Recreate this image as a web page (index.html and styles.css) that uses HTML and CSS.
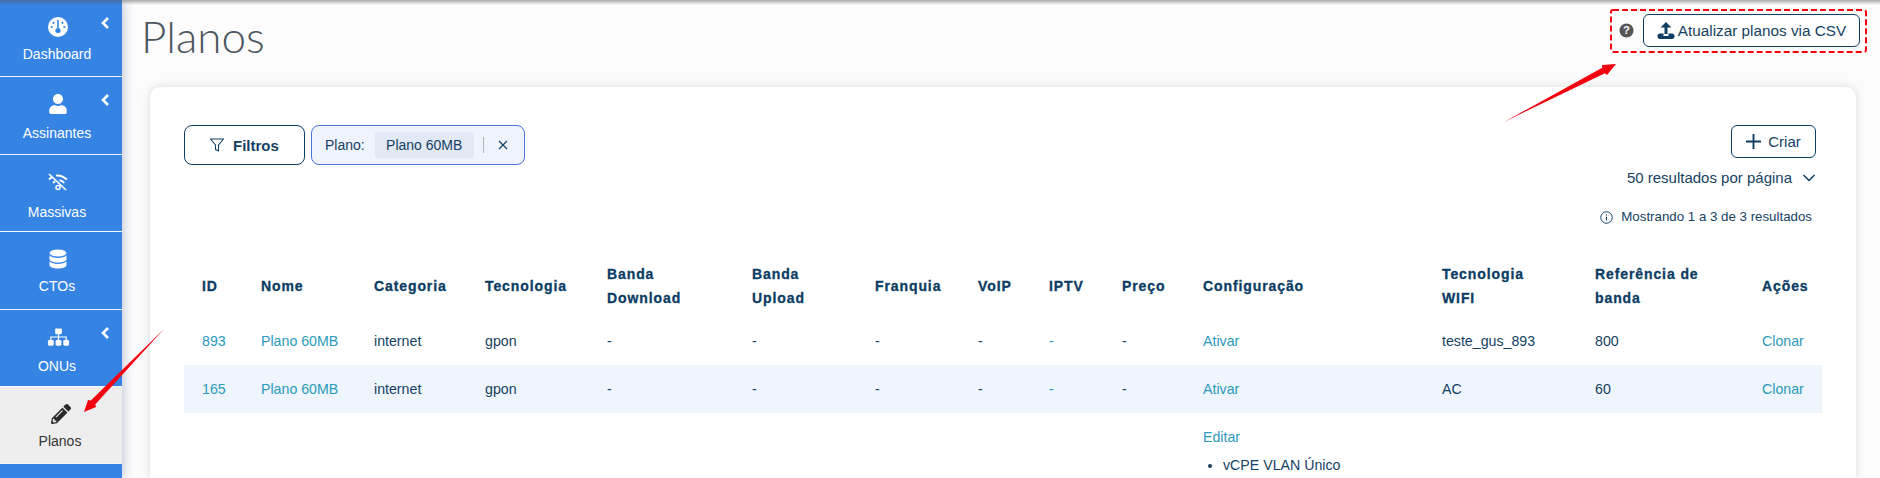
FILE: index.html
```html
<!DOCTYPE html>
<html lang="pt-BR">
<head>
    <meta charset="UTF-8">
    <title>Planos</title>
    <link rel="stylesheet" href="styles.css">
</head>
<body>
    <div class="layout">
        <!-- Sidebar -->
        <nav class="sidebar">
            <a class="nav-item">
                <svg class="nav-icon" viewBox="0 0 20 20"><circle cx="10" cy="10" r="10" fill="#fff"/><path d="M10 3v8" stroke="#3584e4" stroke-width="1.6"/><circle cx="10" cy="13.5" r="2.6" fill="#3584e4"/><circle cx="5.5" cy="5.8" r="1.1" fill="#3584e4"/><circle cx="14.5" cy="5.8" r="1.1" fill="#3584e4"/><circle cx="3.6" cy="10" r="1.1" fill="#3584e4"/><circle cx="16.4" cy="10" r="1.1" fill="#3584e4"/></svg>
                <span>Dashboard</span>
                <svg class="nav-chevron" viewBox="0 0 10 14"><path d="M8 2L3 7l5 5" fill="none" stroke="#fff" stroke-width="2.6"/></svg>
            </a>
            <a class="nav-item nav-item-mid">
                <svg class="nav-icon" viewBox="0 0 448 512"><path fill="#fff" d="M224 256c70.7 0 128-57.3 128-128S294.7 0 224 0 96 57.3 96 128s57.3 128 128 128zm89.6 32h-16.7c-22.2 10.2-46.9 16-72.9 16s-50.6-5.8-72.9-16h-16.7C60.2 288 0 348.2 0 422.4V464c0 26.5 21.5 48 48 48h352c26.5 0 48-21.5 48-48v-41.6c0-74.2-60.2-134.4-134.4-134.4z"/></svg>
                <span>Assinantes</span>
                <svg class="nav-chevron" viewBox="0 0 10 14"><path d="M8 2L3 7l5 5" fill="none" stroke="#fff" stroke-width="2.6"/></svg>
            </a>
            <a class="nav-item nav-item-low">
                <svg class="nav-icon" viewBox="0 0 20 20" fill="none" stroke="#fff"><path d="M1 2l17 16" stroke-width="1.7"/><path d="M1 7.5C2 6.5 3 6 4 5.4M8 3.6c4-.6 7.500 1 11 4" stroke-width="1.9"/><path d="M5 11c.7-.7 1.400-1.200 2.200-1.600M11.500 8.200c2 .3 3.500 1.200 4.800 2.600" stroke-width="1.9"/><circle cx="10" cy="15.500" r="2" stroke-width="1.500"/></svg>
                <span>Massivas</span>
            </a>
            <a class="nav-item">
                <svg class="nav-icon" viewBox="0 0 20 20"><ellipse cx="10" cy="4" rx="8.500" ry="3.500" fill="#fff"/><path fill="#fff" d="M1.500 6.300C3 8.200 6.500 9 10 9s7-.8 8.500-2.700V10c0 2-3.800 3.500-8.500 3.500S1.500 12 1.500 10z"/><path fill="#fff" d="M1.500 12.300C3 14.200 6.500 15 10 15s7-.8 8.500-2.700V16c0 2-3.800 3.500-8.500 3.500S1.500 18 1.500 16z"/></svg>
                <span>CTOs</span>
            </a>
            <a class="nav-item nav-item-mid">
                <svg class="nav-icon nav-icon-wide" viewBox="0 0 24 20"><rect x="8.500" y="1" width="7" height="6" rx="1.200" fill="#fff"/><path d="M12 7v6M4 13v-3h16v3" fill="none" stroke="#fff" stroke-width="1.300"/><rect x="1" y="13" width="6" height="6" rx="1.500" fill="#fff"/><rect x="9" y="13" width="6" height="6" rx="1.500" fill="#fff"/><rect x="17" y="13" width="6" height="6" rx="1.500" fill="#fff"/></svg>
                <span>ONUs</span>
                <svg class="nav-chevron" viewBox="0 0 10 14"><path d="M8 2L3 7l5 5" fill="none" stroke="#fff" stroke-width="2.6"/></svg>
            </a>
            <a class="nav-item nav-item-active">
                <svg class="nav-icon" viewBox="0 0 512 512"><path fill="#2b2b2b" d="M497.900 142.100l-46.100 46.100c-4.700 4.700-12.300 4.700-17 0l-111-111c-4.700-4.700-4.700-12.300 0-17l46.100-46.100c18.700-18.700 49.100-18.700 67.900 0l60.100 60.100c18.800 18.700 18.800 49.100 0 67.900zM284.200 99.800L21.600 362.400.4 483.900c-2.900 16.400 11.400 30.600 27.800 27.800l121.500-21.300 262.600-262.600c4.700-4.700 4.700-12.300 0-17l-111-111c-4.800-4.700-12.400-4.700-17.100 0zM124.100 339.900c-5.500-5.500-5.500-14.300 0-19.800l154-154c5.500-5.500 14.300-5.500 19.800 0s5.500 14.300 0 19.800l-154 154c-5.500 5.500-14.300 5.500-19.800 0zM88 424h48v36.300l-64.500 11.300-31.100-31.100L51.700 376H88v48z"/></svg>
                <span>Planos</span>
            </a>
            <div class="nav-rest"></div>
        </nav>

        <main class="content">
            <header class="page-header">
                <h1>Planos</h1>
                <div class="page-actions">
                    <svg class="help-icon" viewBox="0 0 16 16"><circle cx="8" cy="8" r="7.500" fill="#555"/><text x="8" y="12" text-anchor="middle" class="help-mark">?</text></svg>
                    <button class="btn btn-csv">
                        <svg class="csv-icon" viewBox="0 0 18 18"><path d="M9 0L3.500 5.500h4V12h3V5.500h4z" fill="#0e3f63"/><path d="M.5 14c0-1.500 1-2.500 2.500-2.500h3.500V14h5v-2.500H15c1.500 0 2.500 1 2.500 2.500v.5c0 1.500-1 2.500-2.500 2.500H3c-1.500 0-2.500-1-2.500-2.500z" fill="#0e3f63"/></svg>
                        Atualizar planos via CSV
                    </button>
                </div>
            </header>

            <section class="card">
                <div class="toolbar">
                    <div class="filters">
                        <button class="btn btn-filter">
                            <svg class="filter-icon" viewBox="0 0 16 16"><path d="M1.500 2h13L9.500 8v6l-3-1.500V8z" fill="none" stroke="#0e3f63" stroke-width="1.100" stroke-linejoin="round"/></svg>
                            Filtros
                        </button>
                        <div class="chip">
                            <span>Plano:</span>
                            <span class="chip-tag">Plano 60MB</span>
                            <span class="chip-sep"></span>
                            <svg class="chip-close" viewBox="0 0 10 10"><path d="M1 1l8 8M9 1l-8 8" stroke="#0e3f63" stroke-width="1.100"/></svg>
                        </div>
                    </div>
                    <div class="toolbar-right">
                        <button class="btn btn-create">
                            <svg class="plus-icon" viewBox="0 0 16 16"><path d="M8 0v16M0 8h16" stroke="#0e3f63" stroke-width="2"/></svg>
                            Criar
                        </button>
                        <div class="per-page">
                            50 resultados por página
                            <svg class="per-page-icon" viewBox="0 0 14 8"><path d="M1.500 1L7 6.500 12.500 1" fill="none" stroke="#0e3f63" stroke-width="1.500"/></svg>
                        </div>
                        <div class="showing">
                            <svg class="info-icon" viewBox="0 0 12 12"><circle cx="6" cy="6" r="5.300" fill="none" stroke="#0e3f63" stroke-width=".9"/><path d="M6 5.200v3.500M6 3v1.100" stroke="#0e3f63" stroke-width="1"/></svg>
                            Mostrando 1 a 3 de 3 resultados
                        </div>
                    </div>
                </div>

                <table class="plans">
                    <colgroup>
                        <col class="c-id"><col class="c-name"><col class="c-cat"><col class="c-tec"><col class="c-down"><col class="c-up"><col class="c-fran"><col class="c-voip"><col class="c-iptv"><col class="c-price"><col class="c-conf"><col class="c-wifi"><col class="c-ref"><col class="c-act">
                    </colgroup>
                    <thead>
                        <tr>
                            <th>ID</th><th>Nome</th><th>Categoria</th><th>Tecnologia</th><th>Banda<br>Download</th><th>Banda<br>Upload</th><th>Franquia</th><th>VoIP</th><th>IPTV</th><th>Preço</th><th>Configuração</th><th>Tecnologia<br>WIFI</th><th>Referência de<br>banda</th><th>Ações</th>
                        </tr>
                    </thead>
                    <tbody>
                        <tr>
                            <td><a>893</a></td><td><a>Plano 60MB</a></td><td>internet</td><td>gpon</td><td>-</td><td>-</td><td>-</td><td>-</td><td><a>-</a></td><td>-</td><td><a>Ativar</a></td><td>teste_gus_893</td><td>800</td><td><a>Clonar</a></td>
                        </tr>
                        <tr class="row-alt">
                            <td><a>165</a></td><td><a>Plano 60MB</a></td><td>internet</td><td>gpon</td><td>-</td><td>-</td><td>-</td><td>-</td><td><a>-</a></td><td>-</td><td><a>Ativar</a></td><td>AC</td><td>60</td><td><a>Clonar</a></td>
                        </tr>
                        <tr class="row-top">
                            <td></td><td></td><td></td><td></td><td></td><td></td><td></td><td></td><td></td><td></td>
                            <td>
                                <a>Editar</a>
                                <ul class="conf-list"><li>vCPE VLAN Único</li></ul>
                            </td>
                            <td></td><td></td><td></td>
                        </tr>
                    </tbody>
                </table>
            </section>
        </main>
    </div>

    <!-- Annotations drawn over the page -->
    <div class="top-shade"></div>
    <svg class="notes" viewBox="0 0 1880 478">
        <rect x="1611" y="10" width="255" height="42" rx="2" fill="none" stroke="#f5000f" stroke-width="2" stroke-dasharray="6 3"/>
        <polygon fill="#f5000f" points="1504,122 1604.900,73.200 1607,75 1616,64 1602,65 1602.200,67.800"/>
        <polygon fill="#f5000f" points="164,329 95.200,404.600 96,407 84,412 88,400 90.800,400.400"/>
    </svg>
</body>
</html>
```

FILE: styles.css
```css
* {
    box-sizing: border-box;
}
html, body {
    margin: 0;
    height: 478px;
    overflow: hidden;
}
body {
    font-family: "Liberation Sans", Arial, sans-serif;
    font-size: 14px;
    color: #163f63;
    background: #fcfcfd;
    position: relative;
}
.layout {
    display: flex;
    height: 478px;
}

/* Sidebar */
.sidebar {
    width: 122px;
    flex: none;
    display: flex;
    flex-direction: column;
    background: #3584e4;
    box-shadow: 2px 0 10px rgba(60,90,130,0.3);
    position: relative;
}
.nav-item {
    height: 77.4px;
    flex: none;
    padding: 17px 8px 0 0;
    display: flex;
    flex-direction: column;
    align-items: center;
    color: #fff;
    border-bottom: 1.5px solid #f3f7fd;
    position: relative;
}
.nav-item span {
    margin-top: 9px;
    line-height: 16px;
}
.nav-icon {
    width: 20px;
    height: 20px;
    display: block;
    margin-left: 2px;
}
.nav-icon-wide {
    width: 23px;
}
.nav-item-mid span {
    margin-top: 11px;
}
.nav-item-low span {
    margin-top: 12px;
}
.nav-item-active {
    background: #eee;
    color: #333;
    padding: 17px 2px 0 0;
}
.nav-chevron {
    position: absolute;
    top: 16px;
    right: 12px;
    width: 10px;
    height: 14px;
}
.nav-rest {
    flex: 1;
}

/* Main area */
.content {
    flex: 1;
    min-width: 0;
    padding: 0 24px 0 28px;
}
.page-header {
    height: 87px;
    display: flex;
    justify-content: space-between;
    align-items: flex-start;
}
h1 {
    margin: 10px 0 0 -9px;
    font-family: Lato, sans-serif;
    font-weight: 300;
    font-size: 44px;
    line-height: 52px;
    color: #4d565e;
}
.page-actions {
    display: flex;
    align-items: center;
    gap: 9px;
    margin: 14px -4px 0 0;
}
.help-icon {
    width: 15px;
    height: 15px;
}
.help-mark {
    font-size: 12px;
    font-weight: bold;
    fill: #fff;
}
.btn {
    font-family: inherit;
    color: #163f63;
    background: #fff;
    border: 1px solid #0e3f63;
    border-radius: 6px;
    display: flex;
    align-items: center;
    padding: 0;
}
.btn-csv {
    width: 217px;
    height: 33px;
    font-size: 15.3px;
    justify-content: center;
    gap: 3px;
}
.csv-icon {
    width: 18px;
    height: 18px;
}

/* Card */
.card {
    background: #fff;
    border-radius: 10px 10px 0 0;
    box-shadow: 0 0 10px rgba(0,0,0,0.14);
    padding: 38px 34px 0;
    height: 391px;
}
.toolbar {
    display: flex;
    justify-content: space-between;
    height: 135px;
}
.filters {
    display: flex;
    gap: 6px;
    align-items: flex-start;
}
.btn-filter {
    width: 121px;
    height: 40px;
    border-radius: 8px;
    font-size: 15px;
    font-weight: bold;
    padding-left: 24px;
    gap: 8px;
}
.filter-icon {
    width: 16px;
    height: 16px;
}
.chip {
    width: 214px;
    height: 40px;
    border: 1px solid #4a78d8;
    border-radius: 8px;
    background: #eef3fc;
    display: flex;
    align-items: center;
    padding-left: 13px;
}
.chip-tag {
    margin-left: 10px;
    width: 99px;
    height: 26px;
    line-height: 26px;
    text-align: center;
    background: #e2e8f4;
    border-radius: 3px;
}
.chip-sep {
    width: 1px;
    height: 16px;
    margin: 0 14px 0 9px;
    background: #a9b4c4;
}
.chip-close {
    width: 10px;
    height: 10px;
}
.toolbar-right {
    display: flex;
    flex-direction: column;
    align-items: flex-end;
    padding-right: 6px;
}
.btn-create {
    width: 85px;
    height: 33px;
    font-size: 15px;
    justify-content: center;
    gap: 7px;
}
.plus-icon {
    width: 15px;
    height: 15px;
}
.per-page {
    margin-top: 11px;
    font-size: 15px;
    line-height: 18px;
    display: flex;
    align-items: center;
    gap: 10px;
}
.per-page-icon {
    width: 14px;
    height: 8px;
}
.showing {
    margin-top: 21px;
    margin-right: 4px;
    font-size: 13.3px;
    line-height: 18px;
    display: flex;
    align-items: center;
    gap: 8px;
}
.info-icon {
    width: 13px;
    height: 13px;
}

/* Table */
.plans {
    width: 1638px;
    table-layout: fixed;
    border-collapse: collapse;
}
.plans th {
    height: 57px;
    padding: 0 0 6px 18px;
    text-align: left;
    vertical-align: middle;
    font-weight: bold;
    line-height: 24px;
    letter-spacing: 0.9px;
    -webkit-text-stroke: 0.3px #0b3c63;
    color: #0b3c63;
}
.plans td {
    height: 48px;
    padding: 0 0 0 18px;
    font-size: 14.2px;
    vertical-align: middle;
}
.plans a {
    color: #2b9abb;
}
.row-alt {
    background: #eef5fc;
}
.plans .row-top td {
    vertical-align: top;
    padding-top: 14px;
    line-height: 20px;
}
.conf-list {
    margin: 8px 0 0;
    padding-left: 20px;
}
.c-id { width: 59px; }
.c-name { width: 113px; }
.c-cat { width: 111px; }
.c-tec { width: 122px; }
.c-down { width: 145px; }
.c-up { width: 123px; }
.c-fran { width: 103px; }
.c-voip { width: 71px; }
.c-iptv { width: 73px; }
.c-price { width: 81px; }
.c-conf { width: 239px; }
.c-wifi { width: 153px; }
.c-ref { width: 167px; }
.c-act { width: 78px; }

/* Overlays */
.top-shade {
    position: absolute;
    left: 0;
    top: 0;
    width: 100%;
    height: 5px;
    background: linear-gradient(rgba(90,90,90,0.5), rgba(90,90,90,0));
}
.notes {
    position: absolute;
    left: 0;
    top: 0;
    width: 1880px;
    height: 478px;
}
```
